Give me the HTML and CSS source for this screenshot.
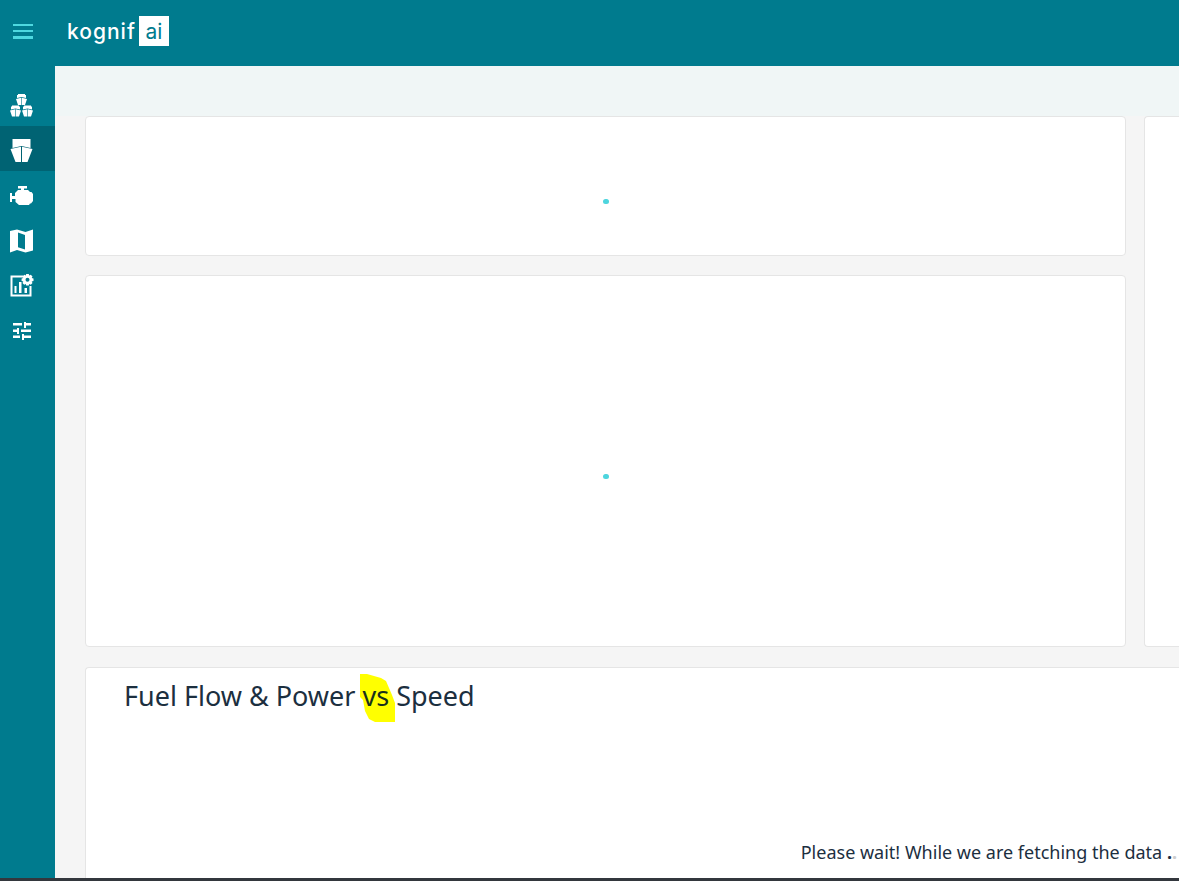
FILE: index.html
```html
<!DOCTYPE html>
<html lang="en">
<head>
<meta charset="utf-8">
<meta name="viewport" content="width=device-width, initial-scale=1">
<title>Kognifai</title>
<link rel="stylesheet" href="styles.css">
</head>
<body>
<header class="topbar">
  <button class="menu" type="button" aria-label="Toggle menu"><svg width="20" height="15" viewBox="0 0 20 15"><path d="M0 0h20v2H0zM0 6h20v2H0zM0 12h20v3H0z"/></svg></button>
  <a class="brand" href="#"><span class="brand-name">kognif</span><span class="brand-box">ai</span></a>
</header>
<div class="shell">
  <nav class="sidebar" aria-label="Main">
    <a class="nav-item" href="#" aria-label="Fleet"><svg width="24" height="24" viewBox="0 0 24 24">
      <g id="mini"><path d="M8 0h7v1h1v3l-4.500-1L7 4V1h1z"/><path d="M6 5l5.200-1.200V11H8zM11.800 3.800L17 5l-2 6h-3.200z"/></g>
      <use href="#mini" x="-6" y="11.500"/><use href="#mini" x="6" y="11.500"/></svg></a>
    <a class="nav-item active" href="#" aria-label="Vessel" aria-current="page"><svg width="24" height="24" viewBox="0 0 24 24"><path d="M2.500 0h18v9l-9-2-9 2z"/><path d="M.5 10L11 7.700V23H5.500zM12 7.700L22.500 10l-5 13H12z"/></svg></a>
    <a class="nav-item" href="#" aria-label="Engine"><svg width="24" height="24" viewBox="0 0 24 24"><path d="M8 2h9v2.500h-3V6h4l2 2h1.500l1.500 2v7l-2 2.500h-1L19 21H9l-3.500-3v-3H2v-3h3V9l3-3h3V4.500H8z"/><path d="M0 9h2v9H0z"/></svg></a>
    <a class="nav-item" href="#" aria-label="Map"><svg width="24" height="24" viewBox="0 0 24 24"><path fill-rule="evenodd" d="M0 2L7 .5l8.500 2.500L23 .5v21l-7.500 2-8.500-2.500-7 2.500zM8 3.500v14.700l7 2.300V6z"/></svg></a>
    <a class="nav-item" href="#" aria-label="Report settings"><svg width="24" height="24" viewBox="0 0 24 24"><path d="M.5 1.500H13v2H2.500v17h17V12h2v10.500H.5z"/><path d="M4.500 12h2v7h-2zM9 8h2.500v11H9zM14.500 14H17v5h-2.500z"/><path fill-rule="evenodd" d="M16.200.1h2.600l.4 1.500 1.600-.8 1.700 1.700-.8 1.500 1.800.5V7l-1.800.5.8 1.600-1.700 1.700-1.600-.8-.4 1.600h-2.600l-.4-1.600-1.600.8-1.700-1.700.8-1.600-1.700-.5V4.500l1.700-.5-.8-1.500L14.200.8l1.600.8zM17.500 3.800a2 2 0 100 4 2 2 0 000-4z"/></svg></a>
    <a class="nav-item" href="#" aria-label="Filters"><svg width="24" height="24" viewBox="0 0 24 24"><path d="M3 4h9v2.500H3zM14 3h2v1h5v2.500h-5V9h-2zM3 10.500h4V9h2v6H7v-2H3zM11 10.500h10V13H11zM3 16.500h7V19H3zM12 15h2v1.500h7V19h-7v2h-2z"/></svg></a>
  </nav>
  <main class="content">
    <div class="toolbar"></div>
    <div class="board">
      <div class="stack">
        <section class="card small" aria-label="Loading"><span class="loader"></span></section>
        <section class="card large" aria-label="Loading"><span class="loader"></span></section>
      </div>
      <section class="card side" aria-label="Loading"></section>
      <section class="card chart">
        <h1 class="title">Fuel Flow &amp; Power <span class="mark"><svg class="mark-bg" width="35" height="48" viewBox="0 0 35 48"><path d="M0 0h7l7 2 7 2 5 3 3 7 3 7 3 8v19H15l-6-3-4-8-2-11-3-3z"/></svg><span class="mark-text">vs</span></span> Speed</h1>
        <p class="message" role="status">Please wait! While we are fetching the data <span class="dot">.</span><span class="dot faint">.</span></p>
      </section>
    </div>
  </main>
</div>
<footer class="bottom"></footer>
</body>
</html>
```
FILE: styles.css
```css
* { box-sizing: border-box; }
body {
  margin: 0;
  min-height: 100vh;
  display: flex;
  flex-direction: column;
  background: #f5f5f5;
  color: #1c2f3f;
  font-family: "Noto Sans", "Open Sans", sans-serif;
}
svg { display: block; overflow: visible; fill: currentColor; }
.topbar {
  height: 66px;
  padding: 0 12px 4px;
  display: flex;
  align-items: center;
  gap: 33px;
  background: #007b8e;
}
.menu {
  width: 22px;
  padding: 0 1px;
  border: 0;
  background: none;
  color: #4ed8e0;
}
.brand {
  display: flex;
  align-items: center;
  gap: 3px;
  color: #fff;
  font-family: Inter, Roboto, sans-serif;
  font-size: 21px;
  line-height: 30px;
  text-decoration: none;
}
.brand-name { padding-top: 1px; font-weight: 500; letter-spacing: 1px; }
.brand-box {
  width: 30px;
  height: 30px;
  padding-top: 1px;
  background: #fff;
  color: #007b8e;
  font-weight: 400;
  text-align: center;
}
.shell { flex: 1; display: flex; }
.sidebar {
  width: 55px;
  flex: none;
  padding-top: 15px;
  background: #007b8e;
}
.nav-item {
  height: 45px;
  padding: 5px 10px 0;
  display: flex;
  align-items: center;
  color: #fff;
}
.active { background: #006373; }
.content {
  flex: 1;
  min-width: 0;
  display: flex;
  flex-direction: column;
}
.toolbar { height: 50px; background: #f0f6f6; }
.board {
  flex: 1;
  padding-left: 30px;
  display: grid;
  grid-template-columns: minmax(0, 1fr) 35px;
  grid-template-rows: auto 1fr;
  gap: 20px 18px;
}
.stack { display: grid; gap: 19px; }
.card {
  background: #fff;
  border: 1px solid #e5e5e5;
  border-radius: 4px;
}
.small, .large { display: flex; justify-content: center; }
.small { height: 140px; padding-top: 82px; }
.large { height: 372px; padding-top: 198px; }
.loader {
  width: 6px;
  height: 5px;
  border-radius: 3px;
  background: #4dd5de;
}
.side { border-right: 0; border-radius: 4px 0 0 4px; }
.chart {
  grid-column: 1 / -1;
  min-height: 211px;
  padding: 8px 0 8px 38px;
  display: flex;
  flex-direction: column;
  justify-content: space-between;
  border-right: 0;
  border-bottom: 0;
  border-radius: 4px 0 0;
}
.title {
  margin: 0;
  font-size: 27px;
  line-height: 40px;
  font-weight: 400;
}
.mark { position: relative; }
.mark-bg {
  position: absolute;
  left: -2px;
  top: -3px;
  color: #ff0;
}
.mark-text { position: relative; color: #17301c; }
.message {
  margin: 0;
  padding-right: 2px;
  font-size: 18px;
  line-height: 36px;
  text-align: right;
}
.dot { font-weight: 700; }
.faint { color: #ccc; }
.bottom { height: 3px; background: #33373d; }
```
